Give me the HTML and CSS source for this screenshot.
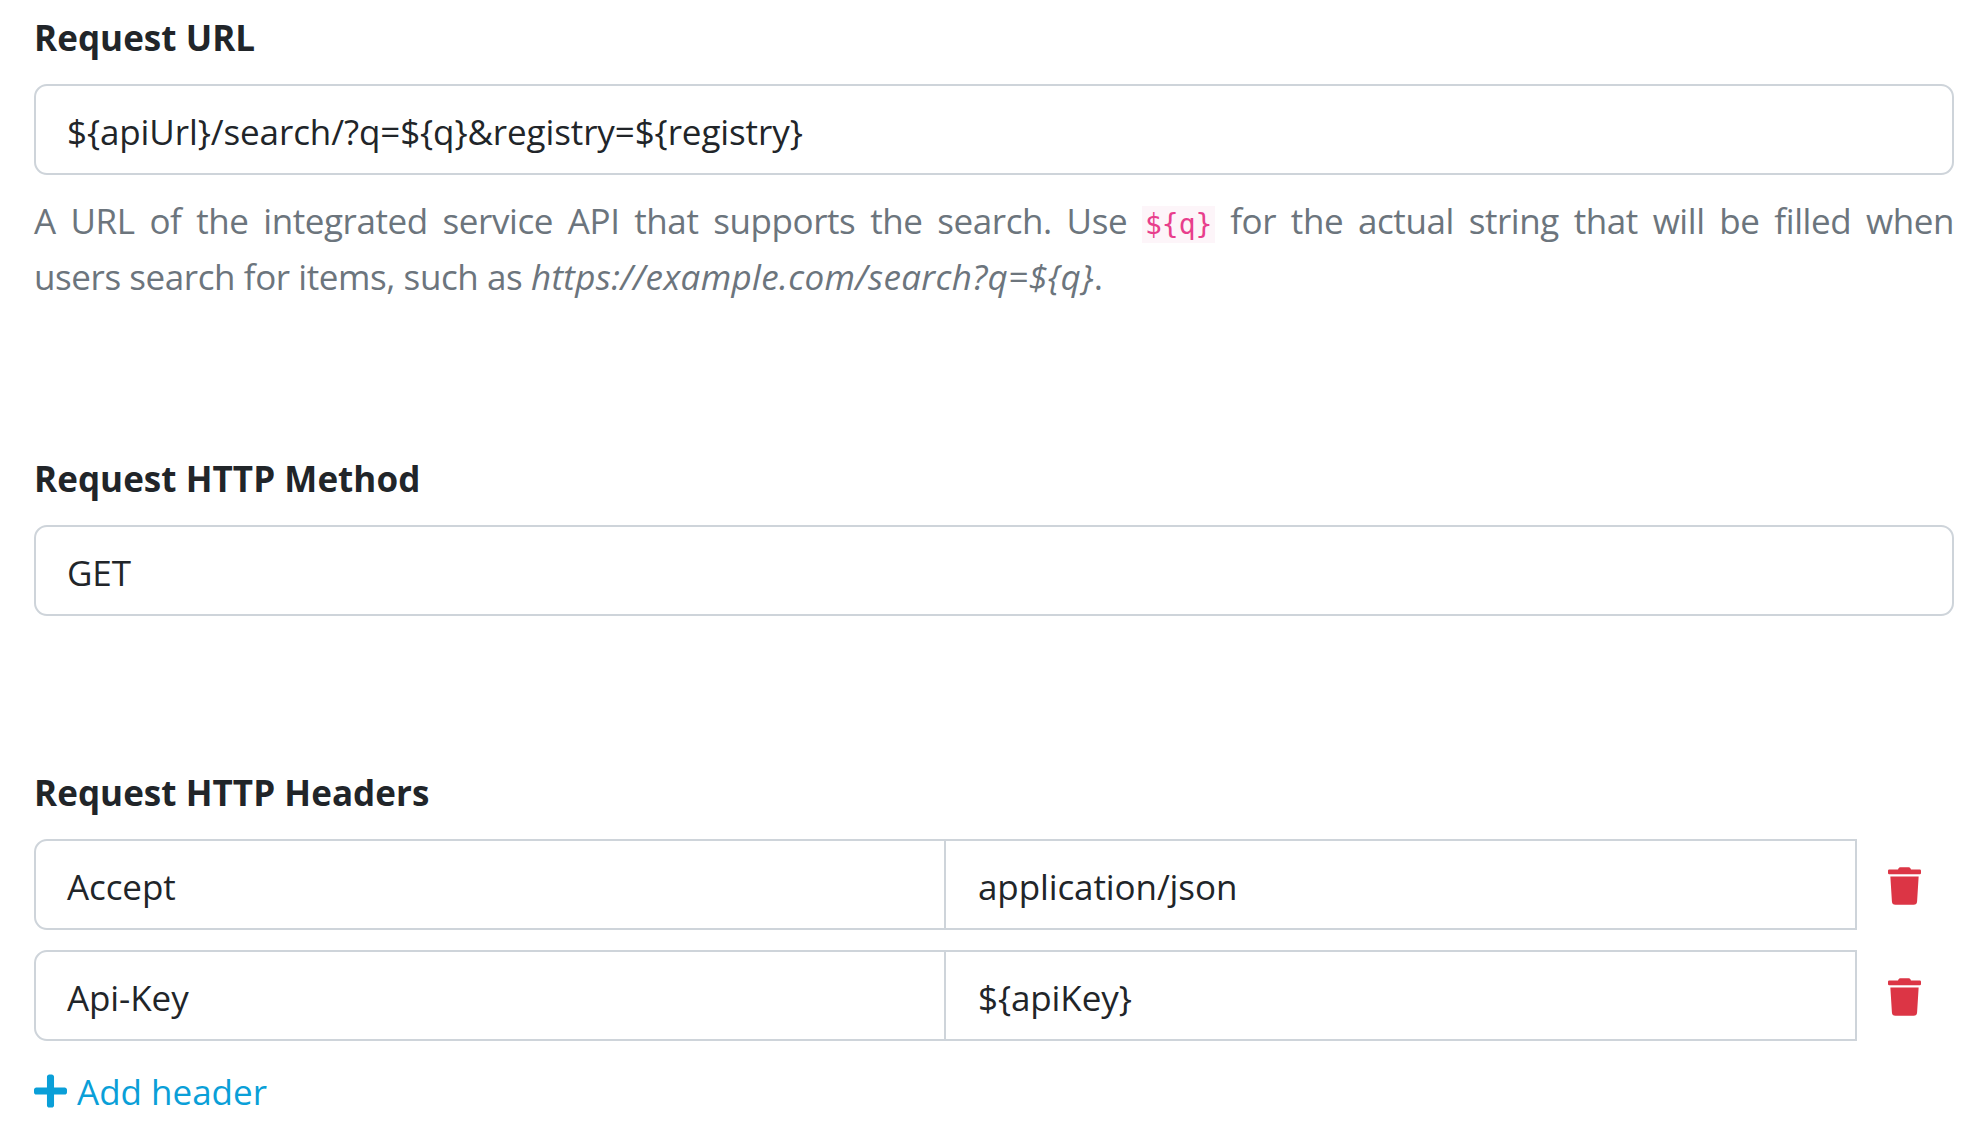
FILE: index.html
```html
<!DOCTYPE html>
<html lang="en">
<head>
<meta charset="utf-8">
<title>Request settings</title>
<link rel="stylesheet" href="styles.css">
</head>
<body>
<main class="form">
  <section class="group group-url">
    <div class="label">Request URL</div>
    <div class="field">${apiUrl}/search/?q=${q}&amp;registry=${registry}</div>
    <p class="help"><span class="help-first">A URL of the integrated service API that supports the search. Use <code>${q}</code> for the actual string that will be filled when</span> users search for items, such as <em>https://example.com/search?q=${q}</em>.</p>
  </section>
  <section class="group group-method">
    <div class="label">Request HTTP Method</div>
    <div class="field">GET</div>
  </section>
  <section class="group">
    <div class="label">Request HTTP Headers</div>
    <div class="row">
      <div class="pair"><div class="cell">Accept</div><div class="cell">application/json</div></div>
      <div class="del"><svg class="trash" viewBox="0 0 448 512"><path d="M432 32H312l-9.400-18.700A24 24 0 0 0 281.100 0H166.800a23.700 23.700 0 0 0-21.400 13.300L136 32H16A16 16 0 0 0 0 48v32a16 16 0 0 0 16 16h416a16 16 0 0 0 16-16V48a16 16 0 0 0-16-16zM53.200 467a48 48 0 0 0 47.900 45h245.800a48 48 0 0 0 47.900-45L416 128H32z"/></svg></div>
    </div>
    <div class="row">
      <div class="pair"><div class="cell">Api-Key</div><div class="cell">${apiKey}</div></div>
      <div class="del"><svg class="trash" viewBox="0 0 448 512"><path d="M432 32H312l-9.400-18.700A24 24 0 0 0 281.100 0H166.800a23.700 23.700 0 0 0-21.400 13.300L136 32H16A16 16 0 0 0 0 48v32a16 16 0 0 0 16 16h416a16 16 0 0 0 16-16V48a16 16 0 0 0-16-16zM53.200 467a48 48 0 0 0 47.900 45h245.800a48 48 0 0 0 47.900-45L416 128H32z"/></svg></div>
    </div>
    <a class="add"><svg class="plus" viewBox="0 0 448 512"><path d="M416 208H272V64c0-17.670-14.330-32-32-32h-32c-17.670 0-32 14.330-32 32v144H32c-17.670 0-32 14.330-32 32v32c0 17.670 14.330 32 32 32h144v144c0 17.670 14.330 32 32 32h32c17.670 0 32-14.330 32-32V304h144c17.670 0 32-14.330 32-32v-32c0-17.670-14.330-32-32-32z"/></svg>Add header</a>
  </section>
</main>
</body>
</html>
```
FILE: styles.css
```css
html, body { margin: 0; padding: 0; background: #fff; }
body {
  font-family: "Open Sans", "Noto Sans", sans-serif;
  font-size: 35px;
  color: #212529;
  height: 1130px;
  overflow: hidden;
}
.form { padding: 16px 33px 0 34px; }
.label { font-weight: 700; font-size: 35px; line-height: 44px; margin-bottom: 24px; letter-spacing: 0.05px; }
.field {
  box-sizing: border-box;
  height: 91px;
  border: 2px solid #ced4da;
  border-radius: 13px;
  padding: 0 31px;
  line-height: 92px;
  letter-spacing: -0.1px;
}
.group-url { height: 441px; }
.group-method { height: 314px; }
.help { margin: 18px 0 0; line-height: 56px; color: #6c757d; letter-spacing: -0.42px; }
.help-first { display: block; text-align: justify; text-align-last: justify; }
.help em { letter-spacing: 0.35px; }
code { font-family: "DejaVu Sans Mono", monospace; font-size: 28px; line-height: 1; letter-spacing: 0; color: #e83e8c; background: #fdf5f9; padding: 2px 3px; }
.row { display: flex; height: 90.5px; margin-bottom: 20.5px; }
.pair { display: flex; width: 1823px; box-sizing: border-box; border: 2px solid #ced4da; border-radius: 13px 0 0 13px; }
.cell { box-sizing: border-box; flex: 1; padding: 0 31px; line-height: 91px; letter-spacing: -0.1px; }
.cell:first-child { flex: 0 0 908px; }
.cell + .cell { border-left: 2px solid #ced4da; padding-left: 32px; }
.del { flex: 1; display: flex; align-items: center; justify-content: center; padding-right: 2px; padding-top: 3px; }
.trash { width: 33px; height: 38px; fill: #dc3545; }
.add { display: flex; align-items: center; color: #0a9fd8; line-height: 44px; margin-top: 29px; }
.plus { width: 33px; height: 38px; fill: #0a9fd8; margin-right: 10px; margin-bottom: 2px; }
```
